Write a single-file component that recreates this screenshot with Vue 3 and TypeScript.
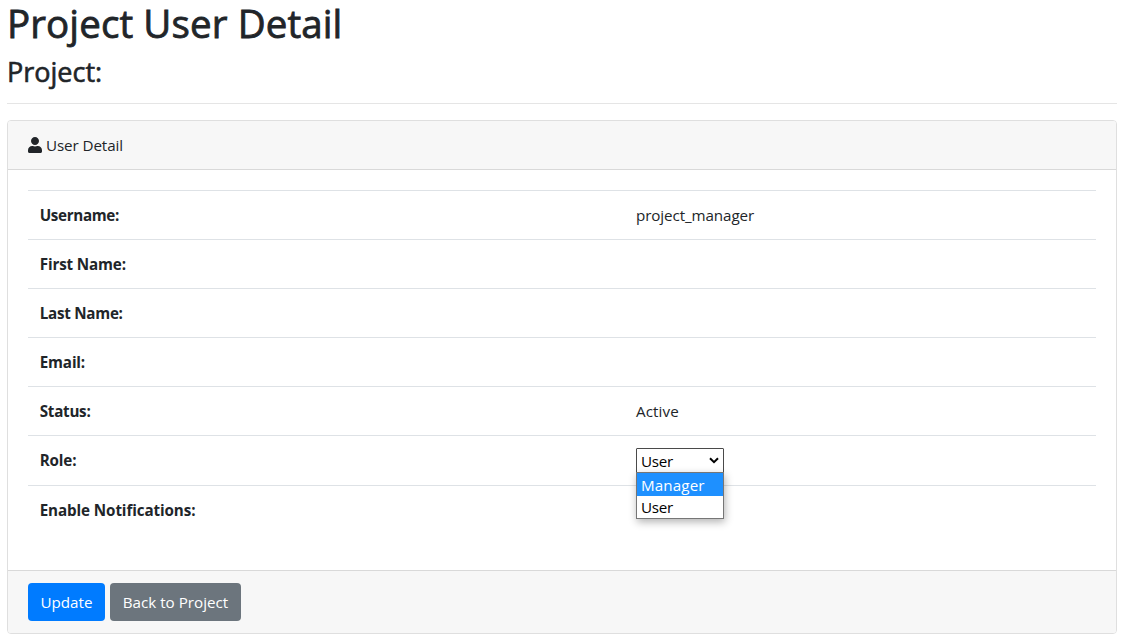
<script setup lang="ts">
import { ref } from 'vue'

interface Row {
  label: string
  value?: string
  kind?: string
}

const rows: Row[] = [
  { label: 'Username:', value: 'project_manager', kind: 'username' },
  { label: 'First Name:', kind: 'first' },
  { label: 'Last Name:', kind: 'last' },
  { label: 'Email:', kind: 'email' },
  { label: 'Status:', value: 'Active', kind: 'status' },
  { label: 'Role:', kind: 'role' },
  { label: 'Enable Notifications:', kind: 'notify' },
]

const roles: string[] = ['Manager', 'User']
const role = ref('User')
const highlighted = ref('Manager')
const open = ref(true)

function choose(name: string): void {
  role.value = name
  open.value = false
}
</script>

<template>
  <main class="page">
    <h1>Project User Detail</h1>
    <h3>Project:</h3>
    <hr />
    <section class="card">
      <header class="card-header">
        <svg class="icon" viewBox="0 0 448 512" aria-hidden="true">
          <path
            fill="currentColor"
            d="M224 256c70.7 0 128-57.3 128-128S294.7 0 224 0 96 57.3 96 128s57.3 128 128 128zm89.6 32h-16.7c-22.2 10.2-46.9 16-72.9 16s-50.6-5.8-72.9-16h-16.7C60.2 288 0 348.2 0 422.4V464c0 26.5 21.5 48 48 48h352c26.5 0 48-21.5 48-48v-41.6c0-74.2-60.2-134.4-134.4-134.4z"
          />
        </svg>
        <span class="title">User Detail</span>
      </header>
      <div class="card-body">
        <dl v-for="row in rows" :key="row.label" class="row" :class="row.kind">
          <dt><span>{{ row.label }}</span></dt>
          <dd>
            <div v-if="row.kind === 'role'" class="select">
              <button class="control" type="button" @click="open = !open">
                <span>{{ role }}</span>
                <svg class="chevron" viewBox="0 0 10 7" aria-hidden="true">
                  <path d="M1 1.2L5 5.2L9 1.2" fill="none" stroke="#000" stroke-width="2" />
                </svg>
              </button>
              <ul v-if="open" class="options">
                <li
                  v-for="name in roles"
                  :key="name"
                  :class="{ active: name === highlighted }"
                  @mouseenter="highlighted = name"
                  @click="choose(name)"
                >
                  <span>{{ name }}</span>
                </li>
              </ul>
            </div>
            <span v-else>{{ row.value }}</span>
          </dd>
        </dl>
      </div>
      <footer class="card-footer">
        <button class="btn update" type="button"><span>Update</span></button>
        <button class="btn back" type="button"><span>Back to Project</span></button>
      </footer>
    </section>
  </main>
</template>

<style>
body {
  margin: 0;
  background: #fff;
  overflow: hidden;
}
</style>

<style scoped>
* {
  box-sizing: border-box;
}
.page {
  width: 1110px;
  height: 642px;
  margin-left: 7px;
  font-family: 'Segoe UI', 'Open Sans', 'Noto Sans', sans-serif;
  font-size: 15.2px;
  letter-spacing: -0.1px;
  line-height: 25px;
  color: #212529;
  white-space: nowrap;
}
h1 {
  height: 54px;
  margin: 0;
  font-size: 38.5px;
  font-weight: 500;
  letter-spacing: 0.1px;
  line-height: 47px;
  -webkit-text-stroke: 0.8px currentColor;
}
h3 {
  height: 49px;
  margin: 0;
  font-size: 27px;
  font-weight: 500;
  letter-spacing: 0;
  line-height: 36px;
  -webkit-text-stroke: 0.6px currentColor;
}
hr {
  height: 1px;
  margin: 0 0 16px;
  border: 0;
  background: #e5e5e5;
}
.card {
  display: flex;
  flex-direction: column;
  height: 514px;
  border: 1px solid #dfdfdf;
  border-radius: 4px;
  background: #fff;
}
.card-header {
  display: flex;
  align-items: center;
  height: 49px;
  padding: 0 20px 0 19.5px;
  border-bottom: 1px solid #d9d9d9;
  border-radius: 3px 3px 0 0;
  background: #f7f7f7;
}
.icon {
  width: 14px;
  height: 16px;
  margin-right: 4.5px;
}
.card-body {
  flex: 1;
  padding: 20px 20px 0;
}
.row {
  display: grid;
  grid-template-columns: 596px 1fr;
  height: 49px;
  margin: 0;
  padding: 12px 12px 0;
  border-top: 1px solid #dee2e6;
}
.row.role {
  height: 50px;
}
dt {
  margin-left: -0.3px;
  font-weight: 700;
  letter-spacing: -0.14px;
}
.username dt {
  letter-spacing: -0.33px;
}
.last dt,
.status dt {
  letter-spacing: -0.26px;
}
.notify dt {
  letter-spacing: -0.1px;
}
dd {
  margin: 0;
}
.status dd {
  letter-spacing: 0.1px;
}
.select {
  position: relative;
  width: 88px;
  color: #000;
}
.control {
  display: flex;
  align-items: center;
  justify-content: space-between;
  width: 88px;
  height: 25px;
  padding: 0 4px;
  border: 1px solid #4a4a4a;
  border-radius: 1px;
  background: #fff;
  color: #000;
  font: inherit;
  line-height: 22px;
}
.control span,
.options li {
  letter-spacing: -0.25px;
}
.chevron {
  width: 10px;
  height: 7px;
  margin-top: -1px;
}
.options {
  position: absolute;
  z-index: 2;
  top: 24px;
  left: 0;
  width: 88px;
  height: 47px;
  margin: 0;
  padding: 0;
  border: 1px solid #767676;
  background: #fff;
  box-shadow: 1px 3px 8px rgba(0, 0, 0, 0.3);
  list-style: none;
}
.options li {
  height: 22px;
  padding-left: 4px;
  line-height: 23px;
}
.options li.active {
  height: 23px;
  background: #1e90ff;
  color: #fff;
  letter-spacing: 0.12px;
  line-height: 25px;
}
.card-footer {
  display: flex;
  gap: 5px;
  height: 63px;
  padding: 12px 20px;
  border-top: 1px solid #d9d9d9;
  border-radius: 0 0 3px 3px;
  background: #f7f7f7;
}
.btn {
  height: 38px;
  padding: 1px 0 0;
  border: 0;
  border-radius: 4px;
  color: #fff;
  font: inherit;
  letter-spacing: 0;
}
.update {
  width: 77px;
  background: #007bff;
}
.back {
  width: 131px;
  background: #6c757d;
}
</style>
